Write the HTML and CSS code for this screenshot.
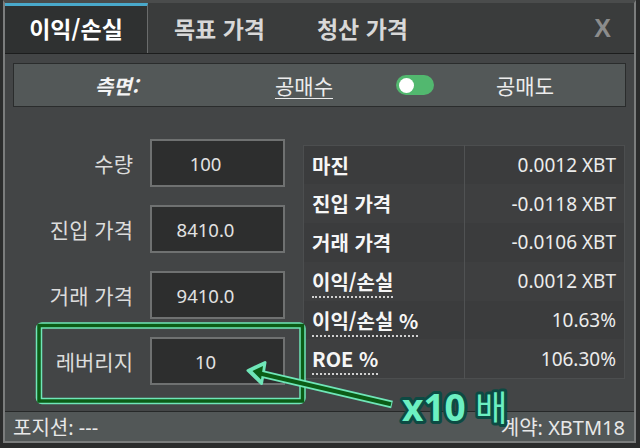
FILE: index.html
```html
<!DOCTYPE html>
<html lang="ko">
<head>
<meta charset="utf-8">
<link rel="stylesheet" href="styles.css">
</head>
<body>
<div class="window">
  <div class="tabs">
    <div class="tab active">이익/손실</div>
    <div class="tab">목표 가격</div>
    <div class="tab">청산 가격</div>
    <div class="close">X</div>
  </div>
  <div class="content">
    <div class="side">
      <div class="side-label">측면:</div>
      <div class="side-opt underline">공매수</div>
      <div class="toggle"><span class="knob"></span></div>
      <div class="side-opt">공매도</div>
    </div>
    <div class="main">
      <div class="form">
        <div class="row"><label>수량</label><div class="input">100</div></div>
        <div class="row"><label>진입 가격</label><div class="input">8410.0</div></div>
        <div class="row"><label>거래 가격</label><div class="input">9410.0</div></div>
        <div class="row"><label>레버리지</label><div class="input">10</div></div>
      </div>
      <table class="results">
        <tr><th>마진</th><td>0.0012 XBT</td></tr>
        <tr><th>진입 가격</th><td>-0.0118 XBT</td></tr>
        <tr><th>거래 가격</th><td>-0.0106 XBT</td></tr>
        <tr><th><span class="dotted">이익/손실</span></th><td>0.0012 XBT</td></tr>
        <tr><th><span class="dotted">이익/손실 %</span></th><td>10.63%</td></tr>
        <tr><th><span class="dotted">ROE %</span></th><td>106.30%</td></tr>
      </table>
    </div>
  </div>
  <div class="status"><span>포지션: ---</span><span>계약: XBTM18</span></div>
</div>
<svg class="annot" width="640" height="448" viewBox="0 0 640 448">
  <rect x="39" y="325.5" width="263.5" height="75.5" rx="3" fill="none" stroke="#6fe6b8" stroke-width="6.5"/>
  <rect x="39" y="325.5" width="263.5" height="75.5" fill="none" stroke="#0b5c16" stroke-width="3.5"/>
  <line x1="392" y1="404.5" x2="260" y2="373.5" stroke="#6fe6b8" stroke-width="7.5"/>
  <polygon points="248,370.5 265,362.5 261.5,383.5" fill="#6fe6b8" stroke="#6fe6b8" stroke-width="3" stroke-linejoin="round"/>
  <line x1="391" y1="404.3" x2="260" y2="373.5" stroke="#0b5c16" stroke-width="4"/>
  <polygon points="252.5,371 263,366 261,379.5" fill="#0b5c16"/>
  <text x="402" y="421" class="note">x10 <tspan class="note-kr">배</tspan></text>
</svg>
</body>
</html>
```

FILE: styles.css
```css
html, body {
  margin: 0;
  padding: 0;
}
body {
  width: 640px;
  height: 448px;
  background: #2b2c2c;
  position: relative;
  overflow: hidden;
  font-family: "Noto Sans", "Noto Sans CJK KR", sans-serif;
  color: #e4e4e4;
}
.window {
  margin-left: 3px;
  width: 633px;
  height: 443px;
  box-sizing: border-box;
  border: 2px solid #7b7d7d;
  border-top: 3px solid #4a4c4c;
  background: #434546;
  display: flex;
  flex-direction: column;
}
.tabs {
  height: 50px;
  flex: none;
  display: flex;
  align-items: stretch;
  background: #3a3c3c;
  border-bottom: 1px solid #1c1d1d;
}
.tab {
  width: 143px;
  display: flex;
  align-items: center;
  justify-content: center;
  font-family: "Noto Sans CJK KR", sans-serif;
  font-weight: 700;
  font-size: 23px;
  color: #d8d8d8;
  box-sizing: border-box;
}
.tab.active {
  background: #2f3131;
  border-top: 3px solid #49a9cb;
  border-right: 1px solid #6a6c6c;
  color: #ffffff;
  padding-bottom: 3px;
}
.close {
  margin-left: auto;
  margin-right: 23px;
  display: flex;
  align-items: center;
  font-family: "Liberation Sans", sans-serif;
  font-weight: 700;
  font-size: 25px;
  color: #8c8c8c;
}
.content {
  flex: 1;
  padding: 9px 8px 0 8px;
  display: flex;
  flex-direction: column;
}
.side {
  height: 44px;
  box-sizing: border-box;
  border: 1px solid #2a2c2c;
  background: #535858;
  display: grid;
  grid-template-columns: 205px 170px 50px 172px;
  align-items: center;
  font-family: "Noto Sans CJK KR", sans-serif;
  font-size: 21px;
  color: #ececec;
}
.side-label {
  text-align: center;
  font-weight: 700;
  font-style: italic;
  font-size: 20px;
  color: #f4f4f4;
}
.side-opt {
  text-align: center;
}
.underline {
  text-decoration: underline;
  text-decoration-thickness: 1px;
  text-underline-offset: 4px;
}
.toggle {
  width: 38px;
  height: 20px;
  border-radius: 10px;
  background: #52b86f;
  margin-left: 7px;
  display: flex;
  align-items: center;
  padding-left: 3px;
  box-sizing: border-box;
}
.knob {
  width: 15px;
  height: 15px;
  border-radius: 50%;
  background: #ffffff;
}
.main {
  display: flex;
  align-items: flex-start;
}
.form {
  width: 290px;
  padding-top: 32px;
  display: flex;
  flex-direction: column;
  gap: 18px;
}
.row {
  display: flex;
  align-items: center;
  height: 48px;
}
.row label {
  width: 120px;
  text-align: right;
  font-family: "Noto Sans CJK KR", sans-serif;
  font-size: 21px;
  color: #dcdcdc;
  margin-right: 17px;
}
.input {
  width: 135px;
  height: 48px;
  box-sizing: border-box;
  border: 2px solid #6f7171;
  background: #2d2e2e;
  display: flex;
  align-items: center;
  justify-content: center;
  padding-right: 24px;
  font-size: 18.5px;
  color: #e2e2e2;
}
.results {
  margin-top: 38px;
  width: 322px;
  border-collapse: collapse;
  background: #3b3c3d;
  border: 1px solid #4c4e4f;
}
.results tr {
  height: 38.8px;
}
.results tr:nth-child(even) {
  background: #3e3f40;
}
.results th {
  width: 152px;
  text-align: left;
  padding: 0 0 0 8px;
  font-family: "Noto Sans CJK KR", sans-serif;
  font-weight: 700;
  font-size: 20px;
  color: #f6f6f6;
  border-right: 1px solid #505253;
}
.results td {
  text-align: right;
  padding: 0 8px 0 0;
  font-size: 19px;
  color: #ececec;
}
.dotted {
  border-bottom: 2px dotted #d0d0d0;
  padding-bottom: 0;
}
.status {
  height: 30px;
  flex: none;
  box-sizing: border-box;
  border-top: 1px solid #262828;
  background: #525757;
  display: flex;
  align-items: center;
  justify-content: space-between;
  padding: 0 9px 0 8px;
  font-family: "Noto Sans", "Noto Sans CJK KR", sans-serif;
  font-size: 20px;
  color: #e8e8e8;
}
.annot {
  position: absolute;
  left: 0;
  top: 0;
  pointer-events: none;
}
.note {
  font-family: "Noto Sans", "Noto Sans CJK KR", sans-serif;
  font-weight: 700;
  font-size: 37px;
  fill: #6cf0c2;
  stroke: #0d4a43;
  stroke-width: 6px;
  paint-order: stroke fill;
  stroke-linejoin: round;
}
.note-kr {
  font-family: "Noto Sans CJK KR", sans-serif;
  font-weight: 400;
  font-size: 35px;
}
```
